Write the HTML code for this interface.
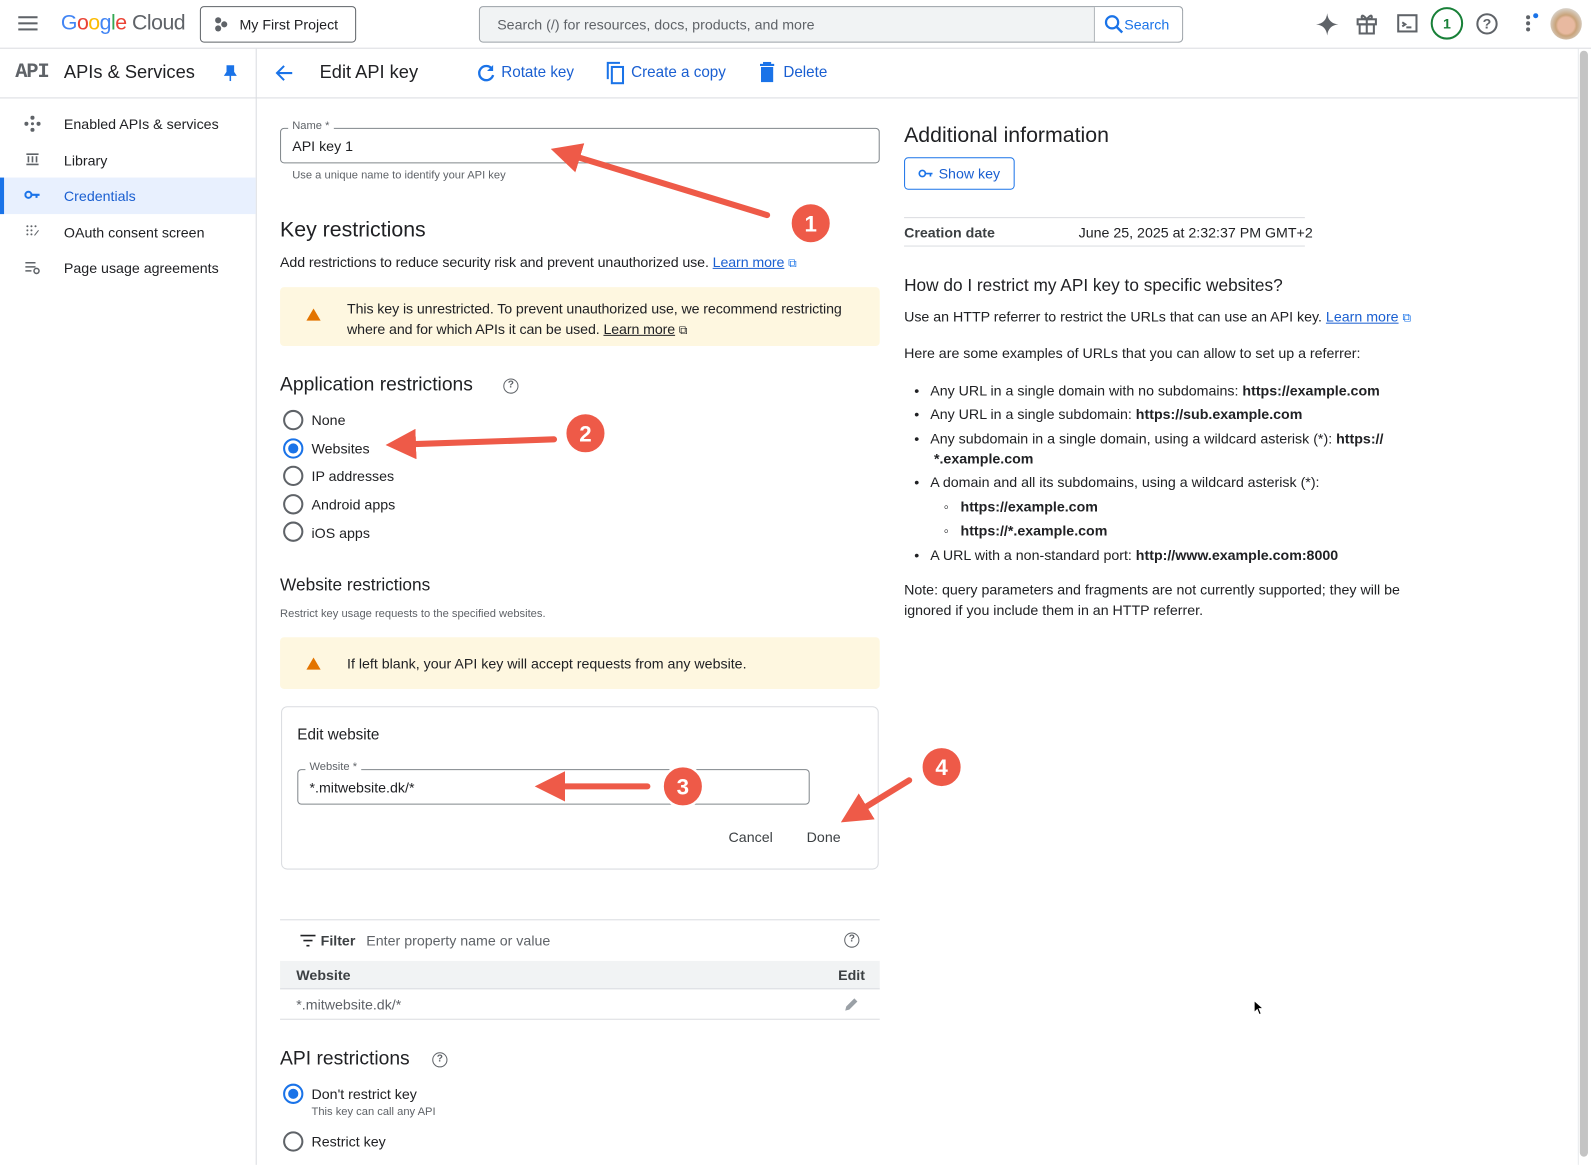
<!DOCTYPE html>
<html><head><meta charset="utf-8"><style>
*{box-sizing:border-box;margin:0;padding:0}
body{width:1591px;height:1148px;overflow:hidden;background:#fff;font-family:"Liberation Sans",Arial,sans-serif;color:#202124;position:relative}
#w{position:absolute;left:0;top:0;width:1568px;height:1132px;transform:scale(1.01467);transform-origin:0 0}
.a{position:absolute;white-space:nowrap}
.blue{color:#1a73e8}
.lnk{color:#1a5fd1;text-decoration:underline}
.radio{position:absolute;width:20px;height:20px;border:2px solid #5f6368;border-radius:50%}
.radio.on{border-color:#1a73e8}
.radio.on:after{content:"";position:absolute;left:3px;top:3px;width:10px;height:10px;border-radius:50%;background:#1a73e8}
.warn{position:absolute;background:#fef7e0;border-radius:4px}
.tri{position:absolute;width:0;height:0;border-left:7px solid transparent;border-right:7px solid transparent;border-bottom:12px solid #e37400}
.q{position:absolute;width:15px;height:15px;border:1.5px solid #5f6368;border-radius:50%;font-size:10px;text-align:center;line-height:12px;color:#5f6368;font-weight:bold}
</style></head><body><div id="w">
<div class="a" style="left:0;top:0;width:1568px;height:48px;border-bottom:1px solid #dadce0"></div>
<div class="a" style="left:18px;top:16px;width:19px;height:2px;background:#5f6368;box-shadow:0 6px 0 #5f6368,0 12px 0 #5f6368"></div>
<div class="a" style="left:60px;top:11px;font-size:21px;letter-spacing:-0.5px"><span style="color:#4285f4">G</span><span style="color:#ea4335">o</span><span style="color:#fbbc04">o</span><span style="color:#4285f4">g</span><span style="color:#34a853">l</span><span style="color:#ea4335">e</span> <span style="color:#5f6368">Cloud</span></div>
<div class="a" style="left:197px;top:6px;width:154px;height:36px;border:1px solid #5f6368;border-radius:4px;font-size:14px;padding:9px 0 0 38px">My First Project</div>
<div class="a" style="left:212px;top:17px;width:6px;height:6px;border-radius:50%;background:#5f6368;box-shadow:6px 4px 0 #5f6368,0 8px 0 #5f6368"></div>
<div class="a" style="left:472px;top:6px;width:694px;height:36px;border:1px solid #9aa0a6;border-radius:4px;background:#f1f3f4"></div>
<div class="a" style="left:1078px;top:7px;width:87px;height:34px;background:#fff;border-left:1px solid #9aa0a6;border-radius:0 4px 4px 0"></div>
<div class="a" style="left:490px;top:16px;font-size:14px;color:#5f6368">Search (/) for resources, docs, products, and more</div>
<svg class="a" style="left:1088px;top:14px" width="20" height="20"><circle cx="8" cy="8" r="6" fill="none" stroke="#1a73e8" stroke-width="2.2"/><path d="M12.5 12.5 L18 18" stroke="#1a73e8" stroke-width="2.4"/></svg>
<div class="a blue" style="left:1108px;top:16px;font-size:14px">Search</div>
<svg class="a" style="left:1296px;top:12px" width="24" height="24"><path d="M12 1 Q13 11 23 12 Q13 13 12 23 Q11 13 1 12 Q11 11 12 1Z" fill="#5f6368"/></svg>
<svg class="a" style="left:1336px;top:12px" width="22" height="22" fill="none" stroke="#5f6368" stroke-width="2"><rect x="2" y="7" width="18" height="5"/><rect x="4" y="12" width="14" height="9"/><path d="M11 7v14M11 7 Q6 1 6 5 Q6 7 11 7 Q16 1 16 5 Q16 7 11 7"/></svg>
<svg class="a" style="left:1376px;top:13px" width="22" height="20" fill="none" stroke="#5f6368" stroke-width="2"><rect x="2" y="2" width="18" height="16"/><path d="M6 9l3 2-3 2M10 14h5"/></svg>
<div class="a" style="left:1410px;top:7px;width:32px;height:32px;border:2px solid #188038;border-radius:50%;color:#188038;font-size:14px;font-weight:bold;text-align:center;line-height:28px">1</div>
<div class="a" style="left:1455px;top:13px;width:21px;height:21px;border:2px solid #5f6368;border-radius:50%;font-size:14px;text-align:center;line-height:17px;color:#5f6368;font-weight:bold">?</div>
<div class="a" style="left:1504px;top:15px;width:4px;height:4px;border-radius:50%;background:#5f6368;box-shadow:0 6px 0 #5f6368,0 12px 0 #5f6368"></div>
<div class="a" style="left:1511px;top:13px;width:5px;height:5px;border-radius:50%;background:#1a73e8"></div>
<div class="a" style="left:1528px;top:8px;width:31px;height:31px;border-radius:50%;background:radial-gradient(circle at 50% 55%,#e8b9a0 0 35%,#c9a37a 45%,#d9d5cf 75%)"></div>
<div class="a" style="left:0;top:96px;width:1555px;height:1px;background:#dadce0"></div>
<div class="a" style="left:252px;top:48px;width:1px;height:1100px;background:#dadce0"></div>
<div class="a" style="left:15px;top:60px;font-family:'Liberation Mono',monospace;font-size:20px;color:#5f6368;font-weight:bold;letter-spacing:-1px">API</div>
<div class="a" style="left:63px;top:61px;font-size:18px">APIs &amp; Services</div>
<svg class="a" style="left:220px;top:64px" width="14" height="16"><path d="M4 1h6v6l2 3H2l2-3zM7 10v6" fill="#1a73e8" stroke="#1a73e8" stroke-width="1.5"/></svg>
<svg class="a" style="left:270px;top:62px" width="20" height="20"><path d="M18 10H3M10 3L3 10l7 7" fill="none" stroke="#1a73e8" stroke-width="2"/></svg>
<div class="a" style="left:315px;top:61px;font-size:18px">Edit API key</div>
<svg class="a" style="left:469px;top:62px" width="20" height="20"><path d="M16 6A7 7 0 1 0 17 12" fill="none" stroke="#1a73e8" stroke-width="2.3"/><path d="M17 2v6h-6z" fill="#1a73e8"/></svg>
<div class="a blue" style="left:494px;top:63px;font-size:15px;color:#1a5fd1">Rotate key</div>
<svg class="a" style="left:596px;top:60px" width="22" height="24" fill="none" stroke="#1a73e8" stroke-width="2"><path d="M3 18V2h12"/><rect x="7" y="6" width="11" height="16"/></svg>
<div class="a blue" style="left:622px;top:63px;font-size:15px;color:#1a5fd1">Create a copy</div>
<svg class="a" style="left:748px;top:61px" width="16" height="20"><path d="M1 3h14M5 3V1h6v2" stroke="#1a73e8" stroke-width="2" fill="none"/><rect x="2" y="5" width="12" height="15" fill="#1a73e8"/></svg>
<div class="a blue" style="left:772px;top:63px;font-size:15px;color:#1a5fd1">Delete</div>
<div class="a" style="left:0;top:175px;width:252px;height:36px;background:#e8f0fe"></div>
<div class="a" style="left:0;top:175px;width:4px;height:36px;background:#1a73e8"></div>
<div class="a" style="left:63px;top:114px;font-size:14px">Enabled APIs &amp; services</div>
<div class="a" style="left:63px;top:150px;font-size:14px">Library</div>
<div class="a" style="left:63px;top:185px;font-size:14px;color:#1a5fd1">Credentials</div>
<div class="a" style="left:63px;top:221px;font-size:14px">OAuth consent screen</div>
<div class="a" style="left:63px;top:256px;font-size:14px">Page usage agreements</div>
<svg class="a" style="left:24px;top:114px" width="16" height="16" fill="#5f6368"><circle cx="8" cy="2" r="2"/><circle cx="8" cy="14" r="2"/><circle cx="2" cy="8" r="2"/><circle cx="14" cy="8" r="2"/><circle cx="8" cy="8" r="1.5"/></svg>
<svg class="a" style="left:25px;top:150px" width="14" height="14" stroke="#5f6368" stroke-width="1.6"><path d="M1 2h12M1 12h12M3 4v6M7 4v6M11 4v6"/></svg>
<svg class="a" style="left:24px;top:186px" width="16" height="12"><circle cx="4" cy="6" r="3" fill="none" stroke="#1a73e8" stroke-width="2"/><path d="M7 6h8M12 6v3" stroke="#1a73e8" stroke-width="2"/></svg>
<svg class="a" style="left:25px;top:221px" width="14" height="14" fill="#5f6368"><circle cx="2" cy="2" r="1"/><circle cx="6" cy="2" r="1"/><circle cx="10" cy="2" r="1"/><circle cx="2" cy="6" r="1"/><circle cx="6" cy="6" r="1"/><circle cx="2" cy="10" r="1"/><circle cx="6" cy="10" r="1"/><path d="M9 11l4-5" stroke="#5f6368"/></svg>
<svg class="a" style="left:24px;top:257px" width="16" height="14" stroke="#5f6368" stroke-width="1.5" fill="none"><path d="M1 2h10M1 6h10M1 10h6"/><circle cx="12" cy="10" r="2.5"/></svg>
<div class="a" style="left:276px;top:126px;width:591px;height:35px;border:1px solid #80868b;border-radius:4px"></div>
<div class="a" style="left:284px;top:118px;background:#fff;padding:0 4px;font-size:11px;color:#5f6368">Name *</div>
<div class="a" style="left:288px;top:136px;font-size:14px">API key 1</div>
<div class="a" style="left:288px;top:167px;font-size:11px;color:#5f6368">Use a unique name to identify your API key</div>
<div class="a" style="left:276px;top:215px;font-size:21px">Key restrictions</div>
<div class="a" style="left:276px;top:250px;font-size:14px;letter-spacing:-0.1px">Add restrictions to reduce security risk and prevent unauthorized use. <span class="lnk">Learn more</span> <span style="color:#1a73e8;font-size:12px">⧉</span></div>
<div class="warn" style="left:276px;top:283px;width:591px;height:58px"></div>
<div class="tri" style="left:302px;top:304px"></div>
<div class="a" style="left:342px;top:294px;font-size:14px;line-height:20px;letter-spacing:-0.1px">This key is unrestricted. To prevent unauthorized use, we recommend restricting<br>where and for which APIs it can be used. <span style="text-decoration:underline">Learn more</span> <span style="font-size:12px">⧉</span></div>
<div class="a" style="left:276px;top:369px;font-size:19px">Application restrictions</div>
<div class="q" style="left:496px;top:373px">?</div>
<div class="radio" style="left:279px;top:404px"></div><div class="a" style="left:307px;top:406px;font-size:14px">None</div>
<div class="radio on" style="left:279px;top:432px"></div><div class="a" style="left:307px;top:434px;font-size:14px">Websites</div>
<div class="radio" style="left:279px;top:459px"></div><div class="a" style="left:307px;top:461px;font-size:14px">IP addresses</div>
<div class="radio" style="left:279px;top:487px"></div><div class="a" style="left:307px;top:489px;font-size:14px">Android apps</div>
<div class="radio" style="left:279px;top:514px"></div><div class="a" style="left:307px;top:517px;font-size:14px">iOS apps</div>
<div class="a" style="left:276px;top:567px;font-size:17px">Website restrictions</div>
<div class="a" style="left:276px;top:599px;font-size:11px;color:#5f6368">Restrict key usage requests to the specified websites.</div>
<div class="warn" style="left:276px;top:628px;width:591px;height:51px"></div>
<div class="tri" style="left:302px;top:648px"></div>
<div class="a" style="left:342px;top:646px;font-size:14px">If left blank, your API key will accept requests from any website.</div>
<div class="a" style="left:277px;top:696px;width:589px;height:161px;border:1px solid #dadce0;border-radius:6px"></div>
<div class="a" style="left:293px;top:716px;font-size:15px">Edit website</div>
<div class="a" style="left:293px;top:758px;width:505px;height:35px;border:1px solid #80868b;border-radius:4px"></div>
<div class="a" style="left:301px;top:750px;background:#fff;padding:0 4px;font-size:11px;color:#5f6368">Website *</div>
<div class="a" style="left:305px;top:768px;font-size:14px">*.mitwebsite.dk/*</div>
<div class="a" style="left:718px;top:817px;font-size:14px;color:#3c4043">Cancel</div>
<div class="a" style="left:795px;top:817px;font-size:14px;color:#3c4043">Done</div>
<div class="a" style="left:276px;top:906px;width:591px;height:1px;background:#dadce0"></div>
<svg class="a" style="left:296px;top:921px" width="15" height="12" stroke="#202124" stroke-width="1.6"><path d="M0 1h15M3 6h9M6 11h3"/></svg>
<div class="a" style="left:316px;top:919px;font-size:14px;font-weight:bold;color:#3c4043">Filter</div>
<div class="a" style="left:361px;top:919px;font-size:14px;color:#5f6368">Enter property name or value</div>
<div class="q" style="left:832px;top:919px">?</div>
<div class="a" style="left:276px;top:947px;width:591px;height:28px;background:#f1f3f4;border-bottom:1px solid #dadce0"></div>
<div class="a" style="left:292px;top:953px;font-size:14px;font-weight:bold;color:#3c4043">Website</div>
<div class="a" style="left:826px;top:953px;font-size:14px;font-weight:bold;color:#3c4043">Edit</div>
<div class="a" style="left:292px;top:982px;font-size:14px;color:#5f6368">*.mitwebsite.dk/*</div>
<svg class="a" style="left:832px;top:983px" width="14" height="14"><path d="M1 13l1-4 8-8 3 3-8 8z" fill="#9aa0a6"/></svg>
<div class="a" style="left:276px;top:1004px;width:591px;height:1px;background:#dadce0"></div>
<div class="a" style="left:276px;top:1033px;font-size:19px">API restrictions</div>
<div class="q" style="left:426px;top:1037px">?</div>
<div class="radio on" style="left:279px;top:1068px"></div><div class="a" style="left:307px;top:1070px;font-size:14px">Don't restrict key</div>
<div class="a" style="left:307px;top:1090px;font-size:11px;color:#5f6368">This key can call any API</div>
<div class="radio" style="left:279px;top:1115px"></div><div class="a" style="left:307px;top:1117px;font-size:14px">Restrict key</div>
<div class="a" style="left:891px;top:122px;font-size:21px">Additional information</div>
<div class="a" style="left:891px;top:155px;width:109px;height:32px;border:1px solid #1a73e8;border-radius:4px"></div>
<svg class="a" style="left:905px;top:166px" width="15" height="10"><circle cx="4" cy="5" r="3" fill="none" stroke="#1a73e8" stroke-width="1.6"/><path d="M7 5h7M12 5v3" stroke="#1a73e8" stroke-width="1.6"/></svg>
<div class="a" style="left:925px;top:163px;font-size:14px;color:#1a5fd1">Show key</div>
<div class="a" style="left:891px;top:214px;width:395px;height:1px;background:#dadce0"></div>
<div class="a" style="left:891px;top:221px;font-size:14px;font-weight:bold;color:#3c4043">Creation date</div>
<div class="a" style="left:1063px;top:221px;font-size:14px">June 25, 2025 at 2:32:37 PM GMT+2</div>
<div class="a" style="left:891px;top:242px;width:395px;height:1px;background:#dadce0"></div>
<div class="a" style="left:891px;top:272px;font-size:17px">How do I restrict my API key to specific websites?</div>
<div class="a" style="left:891px;top:304px;font-size:14px">Use an HTTP referrer to restrict the URLs that can use an API key. <span class="lnk">Learn more</span> <span style="color:#1a73e8;font-size:12px">⧉</span></div>
<div class="a" style="left:891px;top:340px;font-size:14px">Here are some examples of URLs that you can allow to set up a referrer:</div>
<div class="a" style="left:901px;top:375px;font-size:14px;line-height:20px">•&nbsp;&nbsp; Any URL in a single domain with no subdomains: <b>https://example.com</b></div>
<div class="a" style="left:901px;top:398px;font-size:14px;line-height:20px">•&nbsp;&nbsp; Any URL in a single subdomain: <b>https://sub.example.com</b></div>
<div class="a" style="left:901px;top:422px;font-size:14px;line-height:20px">•&nbsp;&nbsp; Any subdomain in a single domain, using a wildcard asterisk (*): <b>https://</b><br>&nbsp;&nbsp;&nbsp;&nbsp;&nbsp;<b>*.example.com</b></div>
<div class="a" style="left:901px;top:465px;font-size:14px;line-height:20px">•&nbsp;&nbsp; A domain and all its subdomains, using a wildcard asterisk (*):</div>
<div class="a" style="left:930px;top:489px;font-size:14px;line-height:20px">◦&nbsp;&nbsp; <b>https://example.com</b></div>
<div class="a" style="left:930px;top:513px;font-size:14px;line-height:20px">◦&nbsp;&nbsp; <b>https://*.example.com</b></div>
<div class="a" style="left:901px;top:537px;font-size:14px;line-height:20px">•&nbsp;&nbsp; A URL with a non-standard port: <b>http://www.example.com:8000</b></div>
<div class="a" style="left:891px;top:571px;font-size:14px;line-height:20px">Note: query parameters and fragments are not currently supported; they will be<br>ignored if you include them in an HTTP referrer.</div>
<div class="a" style="left:1555px;top:48px;width:1px;height:1100px;background:#e8eaed"></div>
<div class="a" style="left:1557px;top:50px;width:8px;height:1090px;background:#c4c4c4;border-radius:4px"></div>
<svg class="a" style="left:1235px;top:985px" width="12" height="16"><path d="M1 1v12l3-3 2 5 2-1-2-5h4z" fill="#000" stroke="#fff"/></svg>
<svg class="a" style="left:0;top:0" width="1568" height="1132">
<defs><marker id="h" markerWidth="5" markerHeight="5" refX="2" refY="2.5" orient="auto"><path d="M0 0L5 2.5L0 5z" fill="#ee5a48"/></marker></defs>
<g stroke="#ee5a48" stroke-width="6" stroke-linecap="round" marker-end="url(#h)">
<line x1="756" y1="212" x2="560" y2="152"/>
<line x1="546" y1="433" x2="398" y2="438"/>
<line x1="638" y1="775" x2="545" y2="775"/>
<line x1="896" y1="769" x2="844" y2="801"/>
</g>
<g fill="#ee5a48" stroke="#fff" stroke-width="2.5"><circle cx="799" cy="220" r="20"/><circle cx="577" cy="427" r="20"/><circle cx="673" cy="775" r="20"/><circle cx="928" cy="756" r="20"/></g>
<g fill="#fff" font-family="Liberation Sans" font-size="22" font-weight="bold" text-anchor="middle"><text x="799" y="228">1</text><text x="577" y="435">2</text><text x="673" y="783">3</text><text x="928" y="764">4</text></g>
</svg>
</div></body></html>
